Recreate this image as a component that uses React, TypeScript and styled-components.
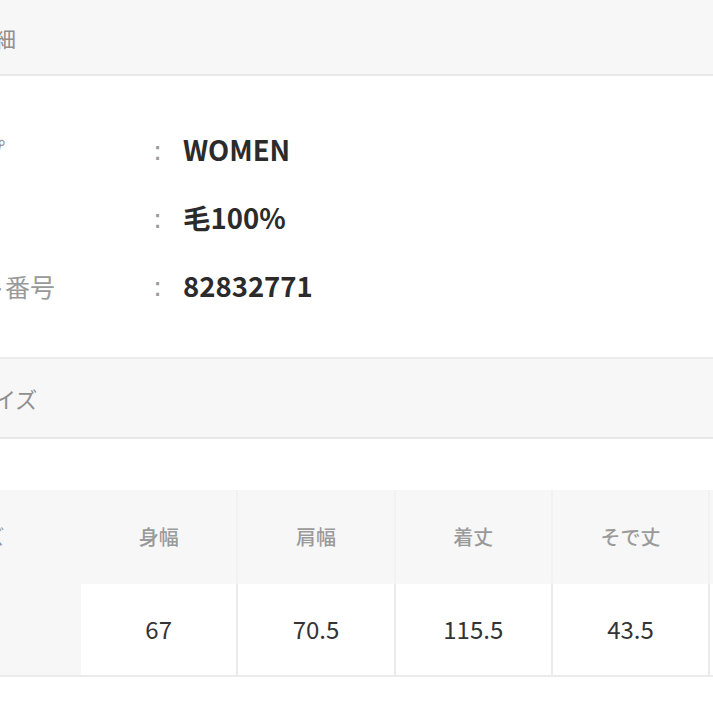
import React from "react";
import styled, { createGlobalStyle } from "styled-components";

const GlobalStyle = createGlobalStyle`
  body {
    margin: 0;
    background: #ffffff;
    font-family: "Noto Sans CJK JP", "Noto Sans", sans-serif;
  }
`;

const Viewport = styled.div`
  width: 713px;
  height: 713px;
  overflow: hidden;
  background: #ffffff;
`;

// the shot is cut on the left, so the page starts a bit off screen
const Page = styled.div`
  margin-left: -72px;
  width: 860px;
`;

const SectionBar = styled.div<{ $top?: boolean }>`
  height: 78px;
  display: flex;
  align-items: center;
  background: #f7f7f7;
  border-top: ${({ $top }) => ($top ? "2px solid #ececec" : "none")};
  border-bottom: 2px solid #e8e8e8;
  color: #8f8f8f;
  font-size: 22px;
`;

const FirstBar = styled(SectionBar)`
  height: 74px;
`;

const DetailList = styled.div`
  padding: 40px 0 37px;
`;

const DetailRow = styled.div`
  height: 68px;
  display: grid;
  grid-template-columns: 226px 29px 1fr;
  align-items: center;
`;

const Label = styled.span`
  padding-left: 2px;
  font-size: 25px;
  color: #999999;
  white-space: nowrap;
`;

const Colon = styled.span`
  font-size: 27px;
  color: #9a9a9a;
  font-family: "DejaVu Sans", sans-serif;
  position: relative;
  top: 0;
  left: -1px;
`;

const Value = styled.span`
  font-size: 27.5px;
  font-weight: 700;
  color: #2b2b2b;
  position: relative;
  top: -1px;
`;

const Spacer = styled.div`
  height: 51px;
`;

const SizeTable = styled.div`
  background: #f7f7f7;
  border-bottom: 2px solid #ebebeb;
`;

const TableRow = styled.div<{ $head?: boolean }>`
  display: grid;
  grid-template-columns: 151px repeat(5, 155.3px);
  column-gap: 2px;
  height: ${({ $head }) => ($head ? "93px" : "91px")};
  margin-bottom: ${({ $head }) => ($head ? "1px" : "0")};
  background: ${({ $head }) => ($head ? "#f2f2f2" : "#ebebeb")};
`;

const RowLabel = styled.div`
  background: #f7f7f7;
  display: flex;
  align-items: center;
  padding-left: 17px;
  font-size: 20px;
  color: #9a9a9a;
  margin-right: -2px;
`;

const HeadCell = styled.div`
  background: #f7f7f7;
  display: flex;
  align-items: center;
  justify-content: center;
  font-size: 20px;
  font-weight: 500;
  color: #9a9a9a;
`;

const BodyCell = styled.div`
  background: #ffffff;
  display: flex;
  align-items: center;
  justify-content: center;
  font-size: 24px;
  font-weight: 400;
  color: #333333;
  padding-bottom: 3px;
`;

const details = [
  { label: "タイプ", value: "WOMEN" },
  { label: "素材", value: "毛100%" },
  { label: "ロット番号", value: "82832771" },
];

const sizes = [
  { name: "身幅", value: "67" },
  { name: "肩幅", value: "70.5" },
  { name: "着丈", value: "115.5" },
  { name: "そで丈", value: "43.5" },
  { name: "裄丈", value: "" },
];

export default function App() {
  return (
    <Viewport>
      <GlobalStyle />
      <Page>
        <FirstBar>商品詳細</FirstBar>
        <DetailList>
          {details.map((d) => (
            <DetailRow key={d.label}>
              <Label>{d.label}</Label>
              <Colon>:</Colon>
              <Value>{d.value}</Value>
            </DetailRow>
          ))}
        </DetailList>
        <SectionBar $top>商品サイズ</SectionBar>
        <Spacer />
        <SizeTable>
          <TableRow $head>
            <RowLabel>サイズ</RowLabel>
            {sizes.map((s) => (
              <HeadCell key={s.name}>{s.name}</HeadCell>
            ))}
          </TableRow>
          <TableRow>
            <RowLabel>F</RowLabel>
            {sizes.map((s) => (
              <BodyCell key={s.name}>{s.value}</BodyCell>
            ))}
          </TableRow>
        </SizeTable>
      </Page>
    </Viewport>
  );
}
